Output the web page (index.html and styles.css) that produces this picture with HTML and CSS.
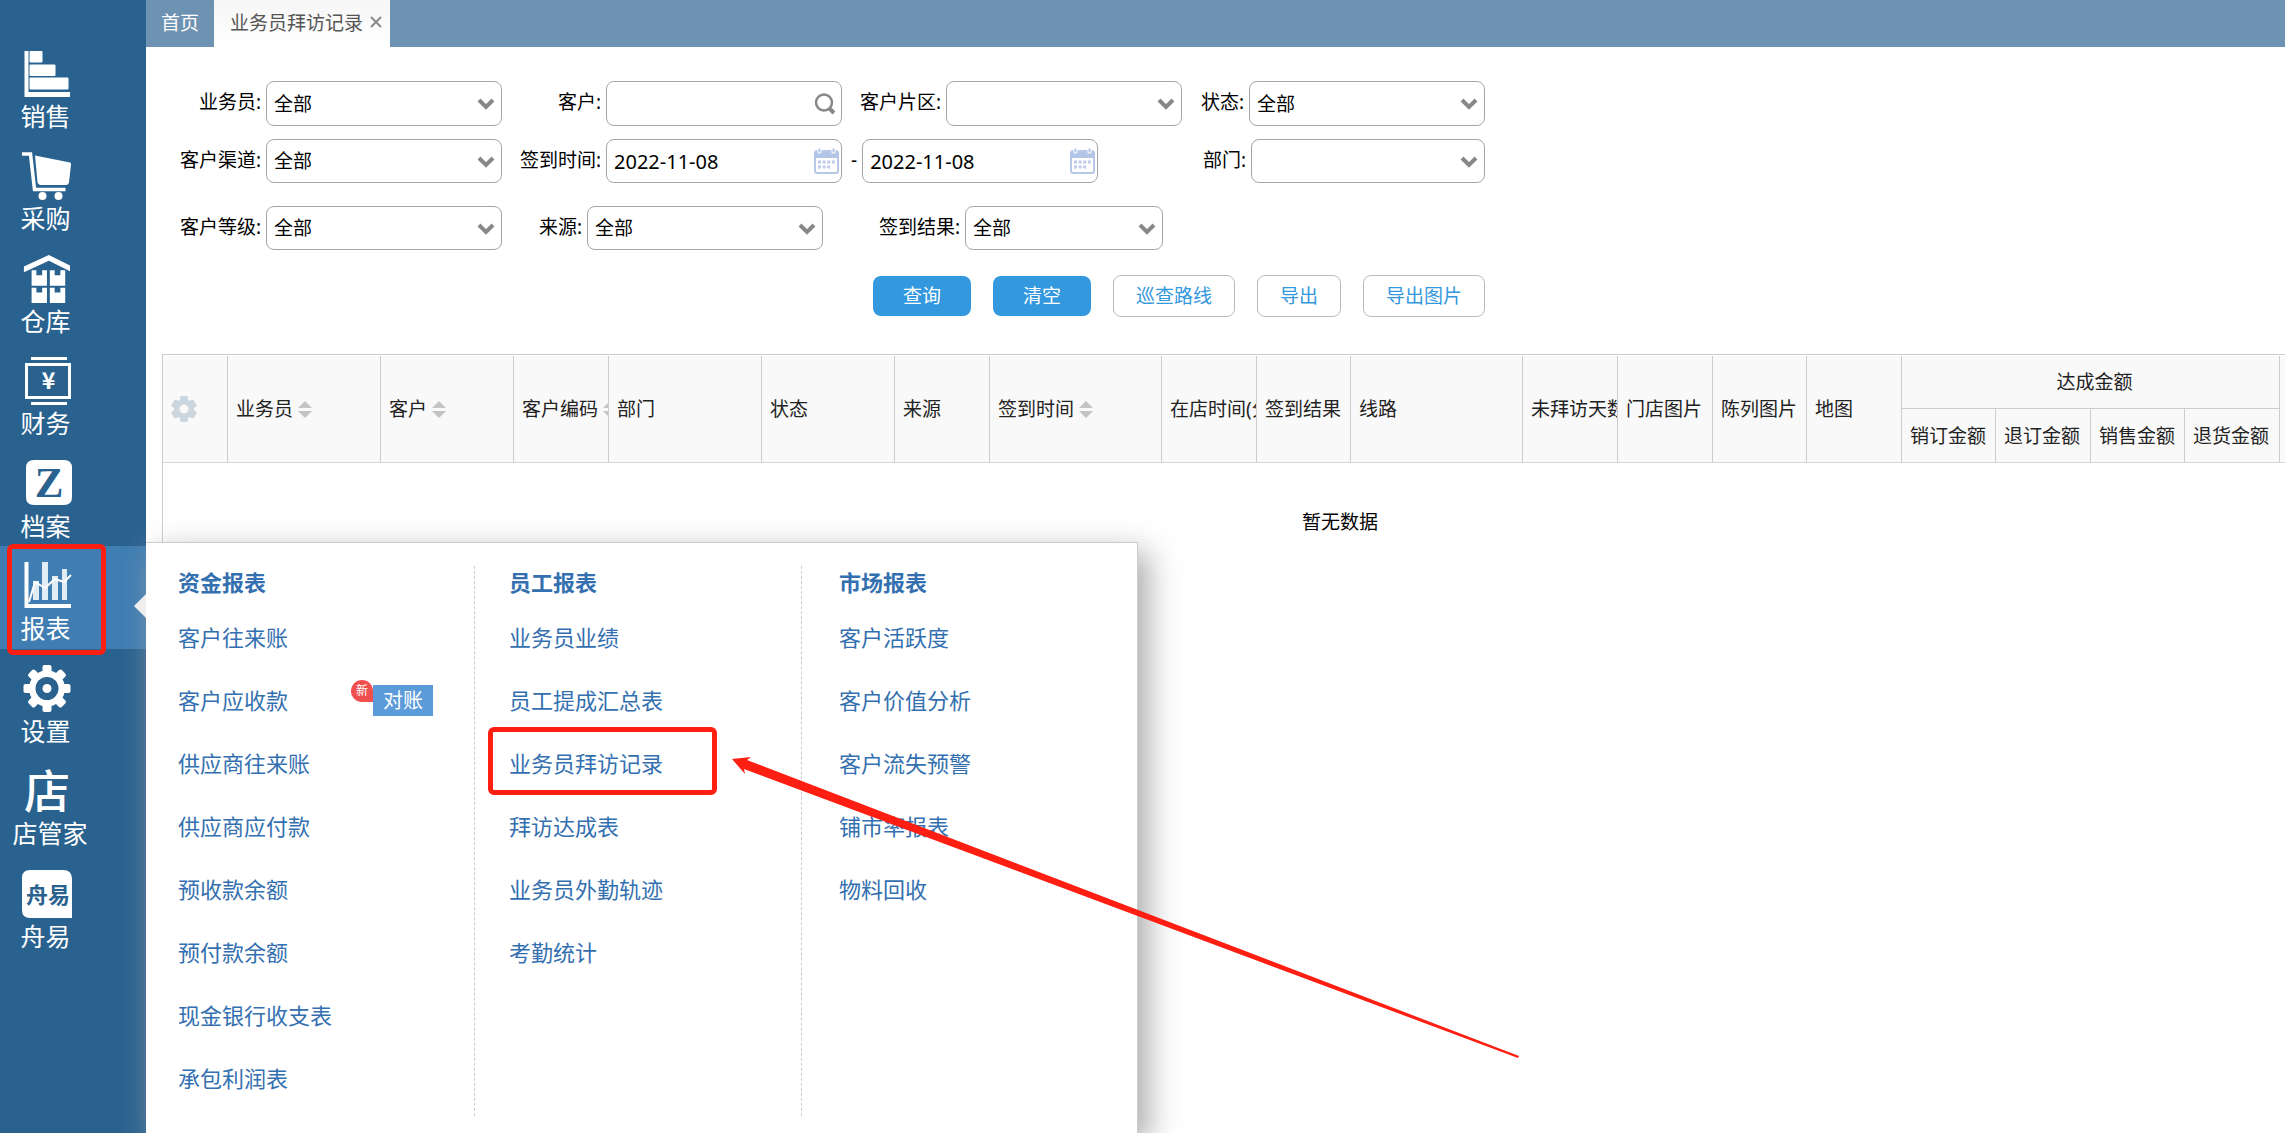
FILE: index.html
```html
<!DOCTYPE html>
<html lang="zh-CN">
<head>
<meta charset="utf-8">
<title>业务员拜访记录</title>
<link rel="stylesheet" href="styles.css">
</head>
<body>
<svg width="0" height="0" class="defs" aria-hidden="true">
  <symbol id="chevron" viewBox="0 0 18 12"><path d="M2 2l7 7 7-7" fill="none" stroke="#888" stroke-width="4"/></symbol>
  <symbol id="calendar" viewBox="0 0 25 26">
    <rect x="1" y="3" width="23" height="22" rx="2" fill="#fff" stroke="#b7c8e8" stroke-width="2"/>
    <path d="M0 4h25v6H0z" fill="#b3c5e7"/>
    <path d="M4 0h3v5H4zM18 0h3v5h-3z" fill="#b3c5e7" stroke="#fff"/>
    <path d="M4 14h17M4 19h13" stroke="#bccbe9" stroke-width="3" stroke-dasharray="3 1.6"/>
  </symbol>
  <symbol id="sort" viewBox="0 0 14 18"><path d="M7 0l7 7H0zM0 10h14l-7 7z" fill="#c4c4c4"/></symbol>
  <symbol id="gear" viewBox="0 0 26 26">
    <g fill="#ccd6de"><circle cx="13" cy="13" r="10"/>
    <rect x="9" width="8" height="26" rx="2"/>
    <rect x="9" width="8" height="26" rx="2" transform="rotate(60 13 13)"/>
    <rect x="9" width="8" height="26" rx="2" transform="rotate(120 13 13)"/></g>
    <circle cx="13" cy="13" r="4.5" fill="#f9f9f9"/>
  </symbol>
</svg>

<div class="app">
  <nav class="sidebar">
    <div class="nav-item">
      <svg class="nav-icon" viewBox="0 0 50 48"><path d="M3.500 1h4v41H49v5H3.500z"/><rect x="8.500" y="1" width="13" height="11.500" rx="1"/><rect x="8.500" y="14.500" width="26" height="11.500" rx="1"/><rect x="8.500" y="27.500" width="39" height="12" rx="1"/></svg>
      <a href="#" class="nav-label">销售</a>
    </div>
    <div class="nav-item">
      <svg class="nav-icon" viewBox="0 0 50 48"><path d="M1 2h8.500l4 35.500h31" fill="none" stroke="#fff" stroke-width="3.500"/><path d="M14 3.500l35 7q1 0 1 2l-2 18q-.5 2.500-3 2.500H20q-3 0-3.500-3z"/><circle cx="21.500" cy="44" r="4"/><circle cx="37.500" cy="44" r="4"/></svg>
      <a href="#" class="nav-label">采购</a>
    </div>
    <div class="nav-item">
      <svg class="nav-icon" viewBox="0 0 50 50"><path d="M2 12L28 0l22 11v6L28 6 2 18z"/><path d="M10 16h5v5h6v-5h5v16H10zM29 16h5v5h6v-5h5v16H29zM10 34h5v5h6v-5h5v16H10zM29 34h5v5h6v-5h5v16H29z"/></svg>
      <a href="#" class="nav-label">仓库</a>
    </div>
    <div class="nav-item">
      <svg class="nav-icon" viewBox="0 0 50 48"><path d="M10 0h36v3H10zM10 45h36v3H10z"/><rect x="5.500" y="7.500" width="43" height="33" fill="none" stroke="#fff" stroke-width="3"/><text x="27.500" y="32" font-size="23" text-anchor="middle" font-weight="bold">¥</text></svg>
      <a href="#" class="nav-label">财务</a>
    </div>
    <div class="nav-item">
      <svg class="nav-icon" viewBox="0 0 50 48"><path d="M13 0h30q8 0 8 8v29q0 8-8 8H13q-8 0-8-8V8q0-8 8-8z"/><text x="28" y="37" font-size="43" text-anchor="middle" class="ink serif">Z</text></svg>
      <a href="#" class="nav-label">档案</a>
    </div>
    <div class="nav-item active">
      <svg class="nav-icon" viewBox="0 0 50 48"><path d="M3.500 0h4v42H50v4H3.500z"/><path d="M12 19h6v19h-6zM21 0h6v38h-6zM31 14h6v24h-6zM41 7h5v31h-5z" opacity=".85"/><path d="M8 40l6-20 10 6 10-9 9 3 7-7" fill="none" stroke="#fff" stroke-width="2"/></svg>
      <a href="#" class="nav-label">报表</a>
      <div class="menu">
        <section class="menu-col">
          <h2>资金报表</h2>
          <a href="#">客户往来账</a>
          <div class="menu-row"><a href="#">客户应收款</a><span class="badges"><span class="new">新</span><a href="#" class="tag">对账</a></span></div>
          <a href="#">供应商往来账</a>
          <a href="#">供应商应付款</a>
          <a href="#">预收款余额</a>
          <a href="#">预付款余额</a>
          <a href="#">现金银行收支表</a>
          <a href="#">承包利润表</a>
        </section>
        <section class="menu-col">
          <h2>员工报表</h2>
          <a href="#">业务员业绩</a>
          <a href="#">员工提成汇总表</a>
          <a href="#" class="marked">业务员拜访记录</a>
          <a href="#">拜访达成表</a>
          <a href="#">业务员外勤轨迹</a>
          <a href="#">考勤统计</a>
        </section>
        <section class="menu-col">
          <h2>市场报表</h2>
          <a href="#">客户活跃度</a>
          <a href="#">客户价值分析</a>
          <a href="#">客户流失预警</a>
          <a href="#">铺市率报表</a>
          <a href="#">物料回收</a>
        </section>
        <svg class="arrow" viewBox="0 0 790 302" aria-hidden="true"><path d="M0 3L19 1l-4 3 772 296-1 2L12 13l1 5z" fill="#ff1e12"/></svg>
      </div>
    </div>
    <div class="nav-item">
      <svg class="nav-icon" viewBox="0 0 50 48"><circle cx="26" cy="23.500" r="18"/><rect x="21.500" y="0" width="9" height="47" rx="2"/><rect x="21.500" y="0" width="9" height="47" rx="2" transform="rotate(45 26 23.500)"/><rect x="21.500" y="0" width="9" height="47" rx="2" transform="rotate(90 26 23.500)"/><rect x="21.500" y="0" width="9" height="47" rx="2" transform="rotate(135 26 23.500)"/><circle cx="26" cy="23.500" r="11.500" class="ink"/><circle cx="26" cy="23.500" r="4.500"/></svg>
      <a href="#" class="nav-label">设置</a>
    </div>
    <div class="nav-item">
      <svg class="nav-icon" viewBox="0 0 50 48"><text x="26" y="41" font-size="46" text-anchor="middle" font-weight="500">店</text></svg>
      <a href="#" class="nav-label wide">店管家</a>
    </div>
    <div class="nav-item">
      <svg class="nav-icon" viewBox="0 0 50 48"><path d="M9 0h33q9 0 9 9v39H9q-8 0-8-8V8q0-8 8-8z"/><text x="27" y="33" font-size="22" text-anchor="middle" font-weight="bold" class="ink">舟易</text></svg>
      <a href="#" class="nav-label">舟易</a>
    </div>
  </nav>

  <main class="main">
    <div class="tabs">
      <a href="#" class="tab">首页</a>
      <div class="tab current"><span>业务员拜访记录</span>
        <button type="button" class="close" aria-label="关闭"><svg viewBox="0 0 12 12"><path d="M1 1l10 10M11 1L1 11" stroke="#8a8a8a" stroke-width="2"/></svg></button></div>
    </div>

    <form class="filters">
      <div class="cell first"><label for="f1">业务员:</label><span class="field"><select id="f1"><option>全部</option></select><svg class="chev"><use href="#chevron"/></svg></span></div>
      <div class="cell first"><label for="f2">客户:</label><span class="field"><input id="f2" type="text"><svg class="search" viewBox="0 0 22 22"><circle cx="10" cy="9.500" r="8" fill="none" stroke="#888" stroke-width="2.500"/><path d="M15 15l5 5" stroke="#888" stroke-width="4"/></svg></span></div>
      <div class="cell first"><label for="f3">客户片区:</label><span class="field"><select id="f3"><option></option></select><svg class="chev"><use href="#chevron"/></svg></span></div>
      <div class="cell first"><label for="f4">状态:</label><span class="field"><select id="f4"><option>全部</option></select><svg class="chev"><use href="#chevron"/></svg></span></div>

      <div class="cell"><label for="f5">客户渠道:</label><span class="field"><select id="f5"><option>全部</option></select><svg class="chev"><use href="#chevron"/></svg></span></div>
      <div class="cell"><label for="f6">签到时间:</label><span class="field"><input id="f6" type="text" value="2022-11-08"><svg class="cal"><use href="#calendar"/></svg></span></div>
      <div class="cell range-end"><label for="f7">-</label><span class="field"><input id="f7" type="text" value="2022-11-08"><svg class="cal"><use href="#calendar"/></svg></span></div>
      <div class="cell"><label for="f8">部门:</label><span class="field dept"><select id="f8"><option></option></select><svg class="chev"><use href="#chevron"/></svg></span></div>

      <div class="cell last"><label for="f9">客户等级:</label><span class="field"><select id="f9"><option>全部</option></select><svg class="chev"><use href="#chevron"/></svg></span></div>
      <div class="cell last inset"><label for="f10">来源:</label><span class="field"><select id="f10"><option>全部</option></select><svg class="chev"><use href="#chevron"/></svg></span></div>
      <div class="cell last inset"><label for="f11">签到结果:</label><span class="field short"><select id="f11"><option>全部</option></select><svg class="chev"><use href="#chevron"/></svg></span></div>

      <div class="actions">
        <button type="button" class="btn primary">查询</button>
        <button type="button" class="btn primary">清空</button>
        <button type="button" class="btn">巡查路线</button>
        <button type="button" class="btn">导出</button>
        <button type="button" class="btn">导出图片</button>
      </div>
    </form>

    <div class="grid">
      <table>
        <colgroup>
          <col class="c-gear"><col class="c-l"><col class="c-m"><col class="c-s"><col class="c-l"><col class="c-m"><col class="c-s"><col class="c-xl"><col class="c-s"><col class="c-xs"><col class="c-xl"><col class="c-s"><col class="c-s"><col class="c-xs"><col class="c-s"><col class="c-xs"><col class="c-s"><col class="c-xs"><col class="c-s"><col>
        </colgroup>
        <thead>
          <tr>
            <th rowspan="2"><svg class="gear"><use href="#gear"/></svg></th>
            <th rowspan="2">业务员<svg class="sort"><use href="#sort"/></svg></th>
            <th rowspan="2">客户<svg class="sort"><use href="#sort"/></svg></th>
            <th rowspan="2">客户编码<svg class="sort"><use href="#sort"/></svg></th>
            <th rowspan="2">部门</th>
            <th rowspan="2">状态</th>
            <th rowspan="2">来源</th>
            <th rowspan="2">签到时间<svg class="sort"><use href="#sort"/></svg></th>
            <th rowspan="2">在店时间(分)</th>
            <th rowspan="2">签到结果</th>
            <th rowspan="2">线路</th>
            <th rowspan="2">未拜访天数</th>
            <th rowspan="2">门店图片</th>
            <th rowspan="2">陈列图片</th>
            <th rowspan="2">地图</th>
            <th colspan="4" class="group">达成金额</th>
            <th rowspan="2"></th>
          </tr>
          <tr>
            <th>销订金额</th><th>退订金额</th><th>销售金额</th><th>退货金额</th>
          </tr>
        </thead>
        <tbody><tr><td colspan="20">暂无数据</td></tr></tbody>
      </table>
    </div>
  </main>
</div>
</body>
</html>
```
FILE: styles.css
```css
*, *::before, *::after { box-sizing: border-box; }
body {
  margin: 0;
  font-family: "Noto Sans", "Noto Sans CJK SC", sans-serif;
  font-size: 19px;
  font-weight: 400;
  line-height: 28px;
  color: #000;
  background: #fff;
}
a { color: inherit; text-decoration: none; }
button, input, select { font: inherit; color: inherit; }
.defs { position: absolute; }

.app { display: flex; height: 100vh; overflow: hidden; }

/* sidebar */
.sidebar {
  flex: none;
  width: 146px;
  padding-top: 34px;
  background: #2a628f;
  display: grid;
  grid-template-rows: repeat(9, 1fr);
  align-content: start;
  padding-bottom: calc(100vh - 956px);
  position: relative;
  z-index: 2;
}
.nav-item { position: relative; padding-top: 16px; color: #fff; --ink: #2a628f; }
.nav-item.active { background: #3f7db2; }
.nav-icon { display: block; width: 50px; height: 48px; margin-left: 21px; fill: #fff; overflow: visible; font-family: "Noto Sans CJK SC", sans-serif; }
.nav-icon .ink { fill: var(--ink); }
.nav-icon .serif { font-family: "Liberation Serif", serif; font-weight: bold; }
.nav-label { display: block; width: 91px; margin-top: 1px; font-size: 25px; line-height: 34px; text-align: center; }
.nav-label.wide { width: 100px; }

.nav-item.active::before {
  content: "";
  position: absolute;
  left: 7px;
  top: -2px;
  width: 99px;
  height: 111px;
  border: 5px solid #ff1e12;
  border-radius: 6px;
  z-index: 1;
}
.nav-item.active::after {
  content: "";
  position: absolute;
  right: 0;
  top: 48px;
  border: 12px solid transparent;
  border-left: 0;
  border-right-color: #eee;
}

/* fly-out menu */
.menu {
  position: absolute;
  left: 100%;
  top: -4px;
  width: 992px;
  padding: 23px 0 18px;
  display: flex;
  background: #fff;
  border: 1px solid #ccc;
  border-left: 0;
  box-shadow: 10px 10px 30px #aaa;
  color: #3470b0;
  font-size: 22px;
  line-height: 32px;
}
.menu-col { flex: none; width: 329px; min-height: 550px; padding-left: 32px; border-right: 1px dashed #ccc; display: flex; flex-direction: column; align-items: flex-start; }
.menu-col:nth-child(2) { width: 327px; padding-left: 34px; }
.menu-col:nth-child(3) { padding-left: 37px; border: 0; }
.menu-col > a, .menu-row { height: 32px; margin-bottom: 31px; }
.menu-col > a:last-child { margin-bottom: 0; }
.menu-col h2 { margin: 0 0 23px; font-size: 22px; line-height: 32px; font-weight: bold; }
.menu-row { position: relative; }
.badges { position: absolute; left: 173px; top: -4px; display: flex; align-items: flex-start; }
.new { width: 22px; height: 22px; border-radius: 11px 11px 0 11px; background: #ef4f4f; color: #fff; font-size: 12px; line-height: 22px; text-align: center; }
.tag { margin-top: 5px; padding: 0 10px; background: #5b9bd9; color: #fff; font-size: 20px; line-height: 31px; white-space: nowrap; }
.marked { position: relative; }
.marked::before {
  content: "";
  position: absolute;
  left: -21px;
  top: -20px;
  width: 229px;
  height: 68px;
  border: 5px solid #ff1e12;
  border-radius: 6px;
}
.arrow { position: absolute; left: 586px; top: 213px; width: 790px; height: 302px; overflow: visible; }

/* tabs */
.main { flex: 1; min-width: 0; }
.tabs { display: flex; height: 47px; background: #6e92b1; line-height: 47px; color: #fff; }
.tab { padding: 0 15px; }
.tab.current { display: flex; align-items: flex-start; gap: 7px; padding: 0 8px 0 16px; background: linear-gradient(#f6f6f6, #fff); color: #555; }
.close { width: 12px; height: 12px; margin-top: 16px; padding: 0; border: 0; background: none; display: flex; }
.close svg { width: 12px; height: 12px; }

/* filters */
.filters { display: grid; grid-template-columns: 356px 340px 340px 303px; padding-top: 34px; row-gap: 13px; }
.cell { display: flex; justify-content: flex-end; align-items: flex-start; gap: 5px; }
.cell label { line-height: 43px; }
.cell.first { height: 45px; }
.cell.last { margin-top: 10px; }
.cell.inset { padding-right: 19px; }
.cell.range-end { justify-content: flex-start; padding-left: 9px; }
.field { position: relative; width: 236px; }
.field.short { width: 198px; }
.field.dept { width: 234px; }
.field select, .field input { display: block; width: 100%; height: 44px; padding: 0 7px; border: 1px solid #a6a6a6; border-radius: 8px; background: #fff; appearance: none; outline: 0; }
.first .field select, .first .field input { height: 45px; }
.field input { font-size: 20px; }
.field svg { position: absolute; pointer-events: none; }
.chev { right: 7px; top: 17px; width: 18px; height: 12px; }
.search { right: 6px; top: 12px; width: 22px; height: 22px; }
.cal { right: 3px; top: 9px; width: 25px; height: 26px; }
.actions { grid-column: 1 / -1; margin-top: 12px; display: flex; justify-content: flex-end; align-items: center; gap: 22px; }
.btn { height: 42px; padding: 0 22px; border: 1px solid #bbb; border-radius: 8px; background: #fff; color: #3398de; }
.btn.primary { height: 40px; padding: 0 30px; border: 0; background: #3398de; color: #fff; }

/* table */
.grid { margin: 37px 0 0 16px; border: 1px solid #ccc; border-right: 0; border-bottom: 0; padding-top: 1px; overflow: hidden; height: 300px; }
table { width: 2354px; table-layout: fixed; border-collapse: separate; border-spacing: 0; }
.c-gear { width: 65px; }
.c-xs { width: 94px; }
.c-s { width: 95px; }
.c-m { width: 133px; }
.c-l { width: 153px; }
.c-xl { width: 172px; }
th { height: 53px; padding: 0 0 0 8px; background: #f9f9f9; border-right: 1px solid #ccc; color: #222; font-weight: 400; text-align: left; white-space: nowrap; overflow: hidden; }
thead tr + tr th { height: 54px; }
th[rowspan], thead tr + tr th { border-bottom: 1px solid #d8d8d8; }
th.group { border-bottom: 1px solid #ccc; text-align: center; }
.sort { width: 14px; height: 18px; margin-left: 5px; vertical-align: -3px; }
.gear { display: block; width: 26px; height: 26px; }
td { height: 118px; padding: 0; text-align: center; }
```
